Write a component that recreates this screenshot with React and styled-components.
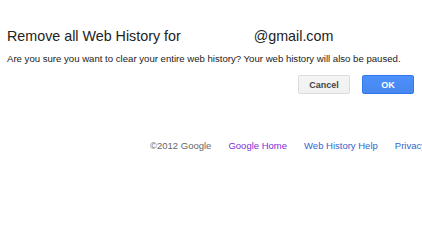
import React from 'react';
import styled, { createGlobalStyle } from 'styled-components';

const GlobalStyle = createGlobalStyle`
  html, body {
    margin: 0;
    padding: 0;
    background: #fff;
    overflow: hidden;
  }
  body {
    font-family: Arial, "Liberation Sans", sans-serif;
  }
`;

function App() {
  return (
    <>
      <GlobalStyle />
      <Page>
        <Dialog>
          <Title>
            Remove all Web History for <Email>@gmail.com</Email>
          </Title>
          <Message>
            Are you sure you want to clear your entire web history? Your web history will also be paused.
          </Message>
          <Buttons>
            <Button>Cancel</Button>
            <Button primary>OK</Button>
          </Buttons>
        </Dialog>
        <Footer>
          <Copy>©2012 Google</Copy>
          <FooterLink visited>Google Home</FooterLink>
          <FooterLink>Web History Help</FooterLink>
          <FooterLink>Privacy Policy</FooterLink>
        </Footer>
      </Page>
    </>
  );
}

export default App;

const Page = styled.div`
  width: 422px;
  height: 233px;
  overflow: hidden;
`;

const Dialog = styled.div`
  padding: 26px 8px 0 7px;
`;

const Title = styled.div`
  font-size: 14.3px;
  color: #222;
  line-height: 20px;
  white-space: nowrap;
`;

const Email = styled.span`
  margin-left: 69px;
`;

const Message = styled.div`
  margin-top: 6px;
  font-size: 9.6px;
  color: #222;
  line-height: 13px;
  white-space: nowrap;
`;

const Buttons = styled.div`
  display: flex;
  justify-content: flex-end;
  gap: 12px;
  margin-top: 10px;
`;

const Button = styled.div`
  box-sizing: border-box;
  width: 52px;
  height: 19px;
  display: flex;
  align-items: center;
  justify-content: center;
  font-size: 9px;
  font-weight: bold;
  border-radius: 2px;
  border: 1px solid ${(p) => (p.primary ? '#3079ed' : '#dcdcdc')};
  background: ${(p) =>
    p.primary
      ? 'linear-gradient(#4d90fe, #4787ed)'
      : 'linear-gradient(#f5f5f5, #f1f1f1)'};
  color: ${(p) => (p.primary ? '#fff' : '#444')};
`;

const Footer = styled.div`
  display: flex;
  gap: 17px;
  margin-top: 46px;
  padding-left: 150px;
  font-size: 9.5px;
  white-space: nowrap;
`;

const Copy = styled.span`
  color: #666;
`;

const FooterLink = styled.span`
  color: ${(p) => (p.visited ? '#7a2ed6' : '#3366cc')};
`;
